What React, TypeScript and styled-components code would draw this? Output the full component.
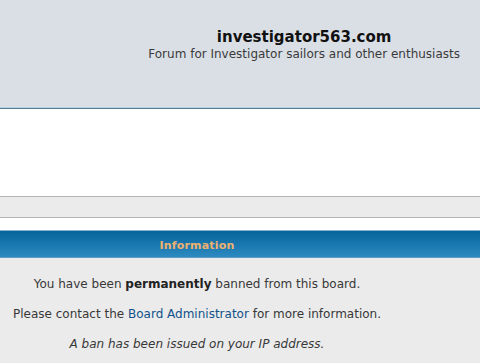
import styled, { createGlobalStyle } from "styled-components";

const GlobalStyle = createGlobalStyle`
  html, body {
    margin: 0;
    padding: 0;
    background: #ffffff;
  }
  body {
    font-family: "DejaVu Sans", Verdana, sans-serif;
    color: #333333;
  }
`;

function App() {
  return (
    <>
      <GlobalStyle />
      <Page>
        <Header>
          <SiteInfo>
            <SiteTitle>investigator563.com</SiteTitle>
            <SiteDescription>
              Forum for Investigator sailors and other enthusiasts
            </SiteDescription>
          </SiteInfo>
        </Header>
        <Blank />
        <NavBar />
        <Spacer />
        <Panel>
          <PanelHead>
            <Cell>Information</Cell>
          </PanelHead>
          <PanelBody>
            <Cell>
              <Message>
                You have been <strong>permanently</strong> banned from this
                board.
              </Message>
              <Message>
                Please contact the <Link href="#">Board Administrator</Link>{" "}
                for more information.
              </Message>
              <Message $italic>A ban has been issued on your IP address.</Message>
            </Cell>
          </PanelBody>
        </Panel>
      </Page>
    </>
  );
}

const Page = styled.div`
  display: flex;
  flex-direction: column;
  min-height: 363px;
  background: #ebebeb;
`;

const Header = styled.div`
  display: flex;
  justify-content: flex-end;
  height: 107px;
  padding: 0 20px 0 0;
  background: #dadfe6;
  border-bottom: 1px solid #b7d2e4;
  box-shadow: 0 1px 0 #557c91;
  position: relative;
`;

const SiteInfo = styled.div`
  display: flex;
  flex-direction: column;
  align-items: center;
  padding-top: 27px;
`;

const SiteTitle = styled.div`
  font-size: 15px;
  font-weight: bold;
  color: #111111;
  line-height: 20px;
`;

const SiteDescription = styled.div`
  font-size: 12px;
  color: #3a3a3a;
  line-height: 15px;
`;

const Blank = styled.div`
  height: 87px;
  margin-top: 1px;
  background: #ffffff;
`;

const NavBar = styled.div`
  height: 20px;
  background: #ebebeb;
  border-top: 1px solid #b4b4b4;
  border-bottom: 1px solid #b4b4b4;
`;

const Spacer = styled.div`
  height: 12px;
  background: #ffffff;
`;

const Panel = styled.div`
  display: flex;
  flex-direction: column;
  flex: 1;
`;

const Cell = styled.div`
  width: 394px;
  text-align: center;
`;

const PanelHead = styled.div`
  height: 24px;
  padding-top: 2px;
  display: flex;
  align-items: center;
  border-top: 1px solid #86b6d0;
  border-bottom: 1px solid #5f9cc4;
  background: linear-gradient(#07649b, #1c7bb2 60%, #2d8ac0);
  font-size: 11px;
  font-weight: bold;
  color: #eeb170;
  letter-spacing: 0.2px;
`;

const PanelBody = styled.div`
  display: flex;
  padding-top: 19px;
  background: #ebebeb;
`;

const Message = styled.p<{ $italic?: boolean }>`
  margin: 0 0 15px;
  font-size: 12px;
  line-height: 15px;
  color: #383838;
  font-style: ${(p) => (p.$italic ? "italic" : "normal")};

  strong {
    color: #222222;
  }
`;

const Link = styled.a`
  color: #105289;
  text-decoration: none;
`;

export default App;
